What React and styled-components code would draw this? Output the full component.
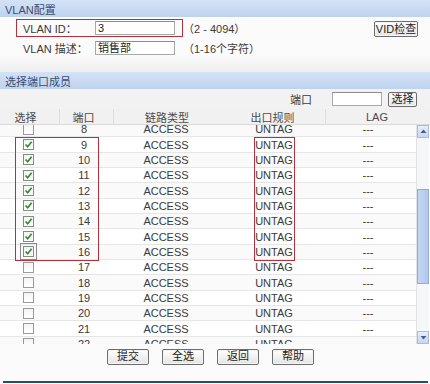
import React, { useLayoutEffect, useRef } from "react";
import styled, { createGlobalStyle } from "styled-components";

const ROW_H = 15.35;
const FONT = `"Liberation Sans", "Noto Sans CJK SC", Arial, sans-serif`;

const Global = createGlobalStyle`
  html, body { margin: 0; padding: 0; background: #fbfbfb; }
  body { font-family: ${FONT}; font-size: 11px; color: #3a3a3a; }
  * { box-sizing: border-box; }
`;

const Page = styled.div`
  width: 430px;
  height: 384px;
  display: flex;
  flex-direction: column;
  background: #fbfbfb;
  overflow: hidden;
`;

const SectionBar = styled.div`
  height: 17px;
  flex: none;
  display: flex;
  align-items: center;
  padding-left: 5px;
  background: linear-gradient(#d3e2f6, #bfd3ef);
  color: #3a4c70;
  font-size: 11px;
`;

const Form = styled.div`
  padding: 2px 0 0 16px;
  display: flex;
  flex-direction: column;
  gap: 2px;
  height: 38px;
  flex: none;
  position: relative;
`;

const FieldRow = styled.div`
  height: 18px;
  display: flex;
  align-items: center;
  border: 1.5px solid ${(p) => (p.$marked ? "#b3313c" : "transparent")};
  width: ${(p) => (p.$marked ? "167px" : "auto")};
  padding-left: 6px;
  position: relative;
`;

const Label = styled.span`
  width: 72px;
  flex: none;
  font-size: 11px;
  color: #3a3a3a;
`;

const TextInput = styled.div`
  width: 80px;
  height: 14px;
  flex: none;
  border: 1px solid #a9a9a9;
  border-top-color: #8c8c8c;
  background: #fff;
  font-size: 11px;
  line-height: 12px;
  padding-left: 2px;
  color: #222;
`;

const Hint = styled.span`
  position: absolute;
  left: 166px;
  white-space: nowrap;
  font-size: 11px;
  color: #3a3a3a;
`;

const HintPlain = styled.span`
  margin-left: 8px;
  white-space: nowrap;
  font-size: 11px;
  color: #3a3a3a;
`;

const Btn = styled.button`
  font-family: ${FONT};
  font-size: 11px;
  color: #222;
  width: ${(p) => p.$w || 42}px;
  height: ${(p) => p.$h || 16}px;
  padding: 0;
  border: 1px solid #6d6d6d;
  border-radius: 2px;
  background: linear-gradient(#ffffff, #e4e4e4);
  box-shadow: inset 0 0 0 1px #f4f4f4;
  line-height: 1;
  cursor: pointer;
`;

const VidBtn = styled(Btn)`
  position: absolute;
  right: 12px;
  top: 4px;
`;

const Band = styled.div`
  height: 17px;
  flex: none;
  background: linear-gradient(#fbfbfb, #eeeeee);
`;

const SearchRow = styled.div`
  height: 20px;
  flex: none;
  display: flex;
  align-items: center;
  justify-content: flex-end;
  padding-right: 13px;
  gap: 6px;
  background: #f2f2f2;
`;

const SmallInput = styled(TextInput)`
  width: 50px;
  height: 14px;
  margin-left: 14px;
`;

const THead = styled.div`
  height: 16px;
  flex: none;
  display: grid;
  grid-template-columns: 60px 54px 106px 106px 1fr;
  background: #f1f1f1;
  border-bottom: 1px solid #d9d9d9;
`;

const TH = styled.div`
  display: flex;
  align-items: center;
  justify-content: center;
  font-size: 11px;
  color: #4a4a4a;
  padding-right: ${(p) => p.$pr || 0}px;
  border-right: ${(p) => (p.$sep ? "1px solid #dedede" : "none")};
`;

const Body = styled.div`
  height: 219px;
  flex: none;
  display: flex;
  background: #fff;
`;

const Viewport = styled.div`
  width: 416px;
  height: 100%;
  overflow: hidden;
  position: relative;
`;

const Rows = styled.div`
  position: relative;
`;

const Row = styled.div`
  height: ${ROW_H}px;
  display: grid;
  grid-template-columns: 56px 56px 108px 108px 80px;
  align-items: center;
  border-bottom: 1px solid #e6e6e6;
  background: ${(p) => (p.$alt ? "#fafafa" : "#ffffff")};
`;

const Cell = styled.div`
  display: flex;
  justify-content: center;
  align-items: center;
  font-size: 11px;
  color: #3a3a3a;
`;

const Box = styled.span`
  width: 11px;
  height: 11px;
  display: inline-flex;
  align-items: center;
  justify-content: center;
  border: 1px solid ${(p) => (p.$checked ? "#7d8f7d" : "#9a9a9a")};
  background: linear-gradient(#f4f4f4, #ffffff);
  outline: ${(p) => (p.$focus ? "1px solid #8a8a8a" : "none")};
  outline-offset: 2px;
`;

const Mark = styled.div`
  position: absolute;
  border: 1.5px solid #b3313c;
  pointer-events: none;
`;

const ScrollBar = styled.div`
  width: 13px;
  height: 100%;
  display: flex;
  flex-direction: column;
  background: #f6f7f9;
  border-left: 1px solid #e2e2e2;
`;

const Arrow = styled.div`
  height: 13px;
  flex: none;
  display: flex;
  align-items: center;
  justify-content: center;
  background: linear-gradient(#e6eefb, #c7d6f0);
  border: 1px solid #a9bcdc;
`;

const Track = styled.div`
  flex: 1;
  display: flex;
  flex-direction: column;
  padding-top: 51px;
  padding-bottom: 47px;
`;

const Thumb = styled.div`
  flex: 1;
  background: linear-gradient(90deg, #c4d5f3, #b2c8ee);
  border: 1px solid #92aad6;
`;

const Buttons = styled.div`
  height: 23px;
  flex: none;
  display: flex;
  align-items: center;
  justify-content: center;
  gap: 13px;
  padding-right: 9px;
  padding-top: 2px;
`;

const Bottom = styled.div`
  flex: 1;
  display: flex;
  flex-direction: column;
  justify-content: flex-end;
  padding: 0 2px 1px 3px;
`;

const Line = styled.div`
  height: 2px;
  background: #31504d;
`;

const Check = () => (
  <svg width="9" height="9" viewBox="0 0 9 9">
    <path d="M1.5 4.5 L3.7 6.8 L7.6 1.8" fill="none" stroke="#2f8a32" strokeWidth="1.6" />
  </svg>
);

const Tri = ({ down }) => (
  <svg width="7" height="5" viewBox="0 0 7 5">
    <path d={down ? "M0.5 1 L6.5 1 L3.5 4.5 Z" : "M0.5 4 L6.5 4 L3.5 0.5 Z"} fill="#4a5f86" />
  </svg>
);

const ports = Array.from({ length: 15 }, (_, i) => i + 8);

export default function App() {
  const vp = useRef(null);
  useLayoutEffect(() => {
    if (vp.current) vp.current.scrollTop = 3;
  }, []);
  return (
    <Page>
      <Global />
      <SectionBar>VLAN配置</SectionBar>
      <Form>
        <FieldRow $marked>
          <Label>VLAN ID：</Label>
          <TextInput>3</TextInput>
          <Hint>（2 - 4094）</Hint>
        </FieldRow>
        <FieldRow>
          <Label>VLAN 描述：</Label>
          <TextInput>销售部</TextInput>
          <HintPlain>（1-16个字符）</HintPlain>
        </FieldRow>
        <VidBtn $w={44} $h={16}>VID检查</VidBtn>
      </Form>
      <Band />
      <SectionBar>选择端口成员</SectionBar>
      <SearchRow>
        <span>端口</span>
        <SmallInput />
        <Btn $w={29} $h={15}>选择</Btn>
      </SearchRow>
      <THead>
        <TH $sep $pr={8}>选择</TH>
        <TH $sep $pr={6}>端口</TH>
        <TH>链路类型</TH>
        <TH $sep>出口规则</TH>
        <TH $pr={2}>LAG</TH>
      </THead>
      <Body>
        <Viewport ref={vp}>
          <Rows>
            {ports.map((p) => {
              const checked = p >= 9 && p <= 16;
              return (
                <Row key={p} $alt={p % 2 === 0}>
                  <Cell>
                    <Box $checked={checked} $focus={p === 16}>
                      {checked && <Check />}
                    </Box>
                  </Cell>
                  <Cell>{p}</Cell>
                  <Cell>ACCESS</Cell>
                  <Cell>UNTAG</Cell>
                  <Cell>---</Cell>
                </Row>
              );
            })}
            <Mark style={{ top: ROW_H, height: 8 * ROW_H + 1, left: 15, width: 84 }} />
            <Mark style={{ top: ROW_H, height: 8 * ROW_H + 1, left: 254, width: 41 }} />
          </Rows>
        </Viewport>
        <ScrollBar>
          <Arrow><Tri /></Arrow>
          <Track><Thumb /></Track>
          <Arrow><Tri down /></Arrow>
        </ScrollBar>
      </Body>
      <Buttons>
        <Btn>提交</Btn>
        <Btn>全选</Btn>
        <Btn>返回</Btn>
        <Btn>帮助</Btn>
      </Buttons>
      <Bottom>
        <Line />
      </Bottom>
    </Page>
  );
}
